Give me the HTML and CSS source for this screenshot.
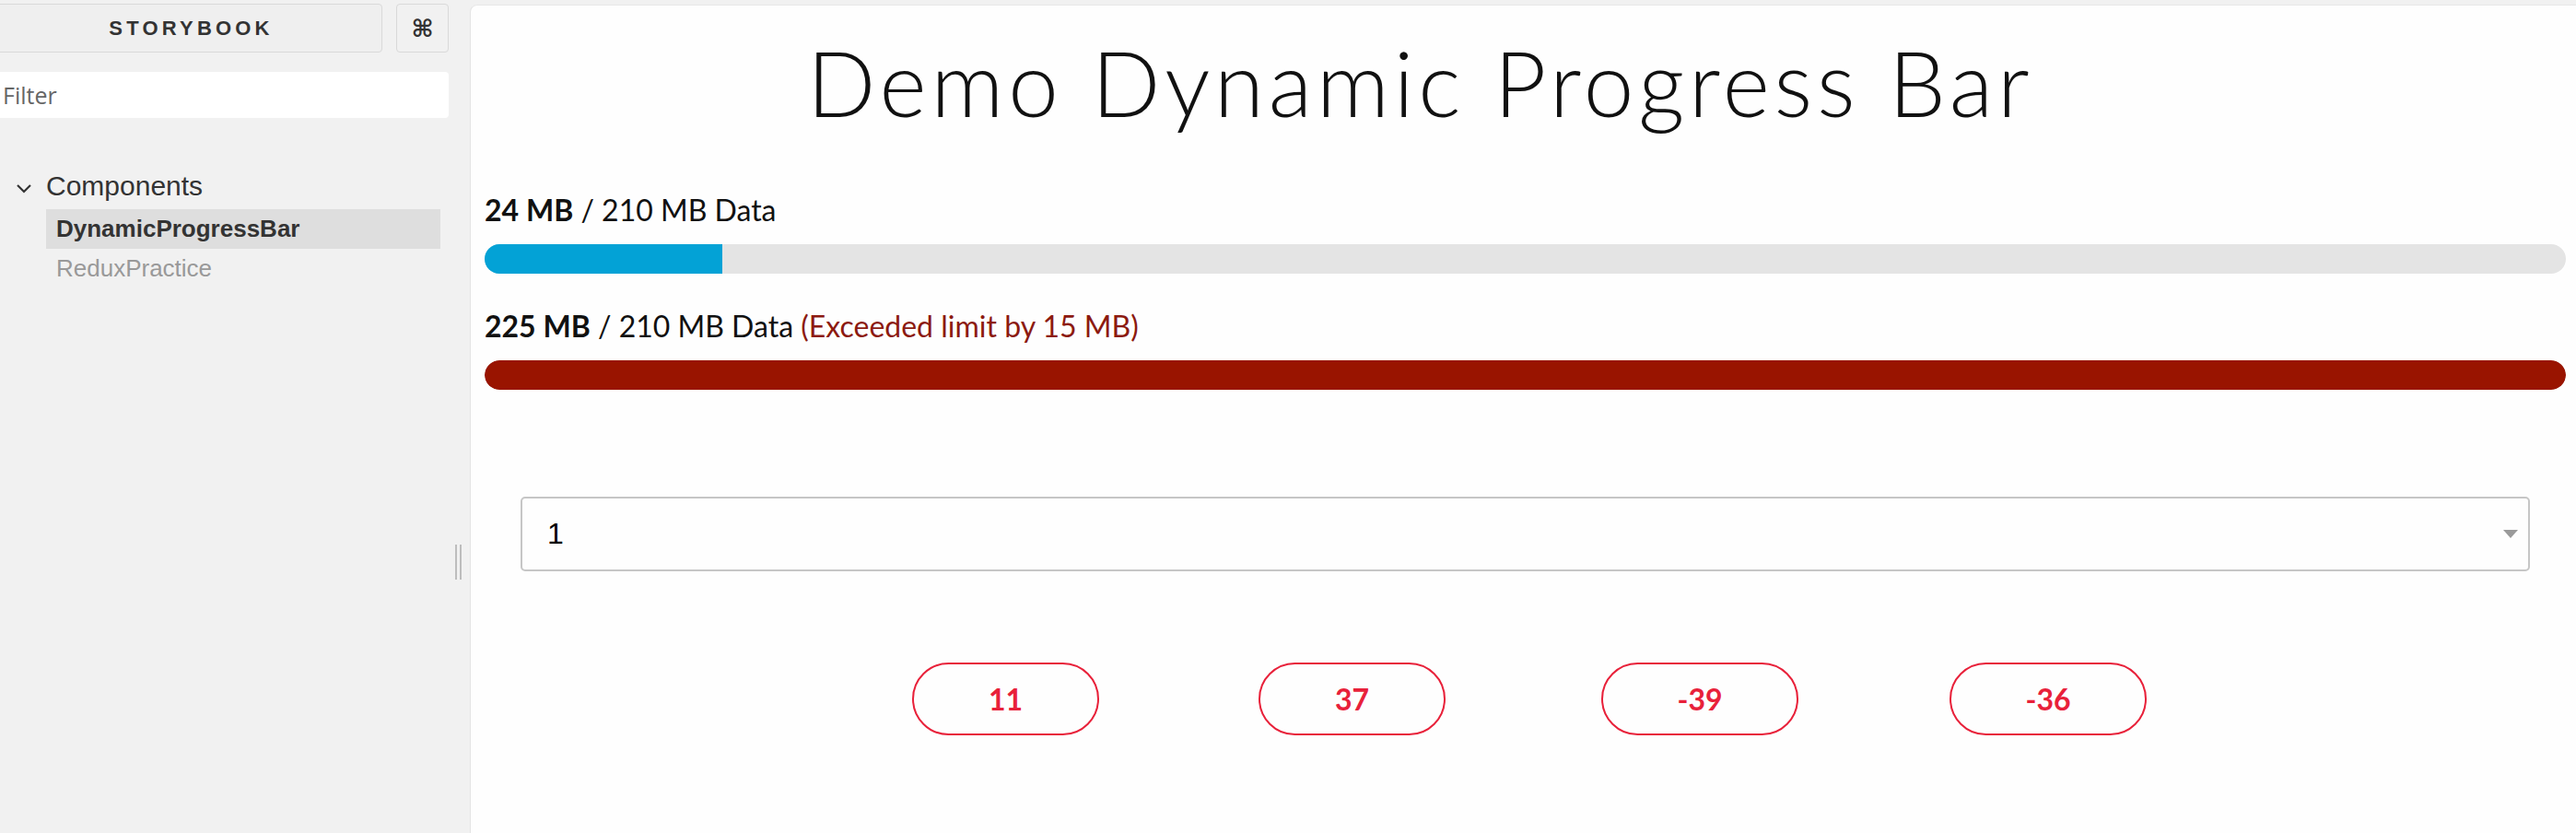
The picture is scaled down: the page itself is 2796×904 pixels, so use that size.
FILE: index.html
```html
<!DOCTYPE html>
<html>
<head>
<meta charset="utf-8">
<link rel="stylesheet" href="styles.css">
</head>
<body>
<div class="app">
  <aside class="sidebar">
    <div class="header">
      <div class="brand">STORYBOOK</div>
      <div class="shortcut">⌘</div>
    </div>
    <div class="filter">Filter</div>
    <div class="tree">
      <div class="kind">
        <svg class="chev" width="18" height="11" viewBox="0 0 18 11"><path d="M2 2 L9 9 L16 2" fill="none" stroke="#333" stroke-width="2.2"/></svg>
        <span>Components</span>
      </div>
      <div class="story active">DynamicProgressBar</div>
      <div class="story">ReduxPractice</div>
    </div>
  </aside>
  <div class="resizer"><span></span><span></span></div>
  <main class="main">
    <h1 class="title">Demo Dynamic Progress Bar</h1>
    <section class="progress">
      <div class="label"><b>24 MB</b> / 210 MB Data</div>
      <div class="track"><div class="fill" style="width:11.43%"></div></div>
    </section>
    <section class="progress second">
      <div class="label"><b>225 MB</b> / 210 MB Data <span class="over">(Exceeded limit by 15 MB)</span></div>
      <div class="track"><div class="fill over-fill" style="width:100%"></div></div>
    </section>
    <div class="select">
      <span>1</span>
      <svg class="arrow" width="16" height="9" viewBox="0 0 16 9"><path d="M0 0 H16 L8 9 Z" fill="#9a9a9a"/></svg>
    </div>
    <div class="buttons">
      <div class="btn">11</div>
      <div class="btn">37</div>
      <div class="btn wide">-39</div>
      <div class="btn wide">-36</div>
    </div>
  </main>
</div>
</body>
</html>
```

FILE: styles.css
```css
html, body {
  margin: 0;
  padding: 0;
}
body {
  background: #f1f1f1;
  width: 2796px;
  height: 904px;
  overflow: hidden;
  font-family: "Liberation Sans", Arial, sans-serif;
}
.app {
  display: flex;
  height: 904px;
}
.sidebar {
  width: 487px;
  flex: none;
  padding-top: 4px;
}
.header {
  display: flex;
  gap: 15px;
  margin-left: -20px;
}
.brand {
  width: 435px;
  height: 53px;
  box-sizing: border-box;
  padding-left: 20px;
  border: 1px solid #d9d9d9;
  border-radius: 4px;
  background: #efefef;
  display: flex;
  align-items: center;
  justify-content: center;
  font-weight: bold;
  font-size: 22px;
  letter-spacing: 4.2px;
  color: #333;
}
.shortcut {
  width: 57px;
  height: 53px;
  box-sizing: border-box;
  border: 1px solid #d9d9d9;
  border-radius: 4px;
  display: flex;
  align-items: center;
  justify-content: center;
  font-size: 26px;
  font-weight: bold;
  color: #333;
  font-family: "DejaVu Sans", sans-serif;
}
.filter {
  margin-top: 21px;
  height: 50px;
  background: #fff;
  border-radius: 0 4px 4px 0;
  display: flex;
  align-items: center;
  padding-left: 3px;
  font-size: 25px;
  color: #666;
  font-family: "Open Sans", sans-serif;
}
.tree {
  margin-top: 54px;
}
.kind {
  display: flex;
  align-items: center;
  height: 40px;
  padding-left: 17px;
  font-size: 30px;
  color: #333;
}
.chev {
  margin-right: 15px;
  margin-top: 4px;
}
.story {
  margin-left: 50px;
  margin-right: 9px;
  height: 42px;
  display: flex;
  align-items: center;
  padding-left: 11px;
  font-size: 26px;
  color: #999;
}
.story.active {
  margin-top: 5px;
  background: #dedede;
  font-weight: bold;
  color: #333;
  height: 43px;
}
.resizer {
  width: 23px;
  flex: none;
  display: flex;
  align-items: flex-start;
  gap: 3px;
  padding: 591px 0 0 7px;
  box-sizing: border-box;
}
.resizer span {
  width: 2px;
  height: 38px;
  background: #bdbdbd;
}
.main {
  flex: 1;
  margin-top: 5px;
  background: #fefefe;
  border-radius: 8px 0 0 0;
  border-left: 1px solid #e4e4e4;
  border-top: 1px solid #e8e8e8;
  padding: 0 11px 0 15px;
  font-family: Lato, "Open Sans", sans-serif;
  color: #111;
}
.title {
  margin: 26px 0 0 0;
  padding-left: 350px;
  font-size: 98px;
  font-weight: 300;
  line-height: 115px;
  letter-spacing: 4.8px;
}
.progress {
  margin-top: 61px;
}
.progress.second {
  margin-top: 37px;
}
.label {
  font-size: 32px;
  line-height: 40px;
  margin-bottom: 17px;
}
.label b {
  font-weight: 700;
}
.over {
  color: #8c1a10;
}
.track {
  height: 32px;
  border-radius: 16px;
  background: #e4e4e4;
  overflow: hidden;
}
.fill {
  height: 100%;
  background: #03a2d6;
}
.over-fill {
  background: #991400;
  border-radius: 16px;
}
.select {
  margin: 116px 39px 0 39px;
  height: 81px;
  box-sizing: border-box;
  border: 2px solid #c6c6c6;
  border-radius: 5px;
  display: flex;
  align-items: center;
  justify-content: space-between;
  padding: 0 11px 0 27px;
  font-family: "Liberation Sans", Arial, sans-serif;
  font-size: 32px;
  color: #000;
}
.buttons {
  margin-top: 99px;
  display: flex;
  justify-content: center;
  padding-left: 9px;
}
.btn {
  width: 203px;
  height: 79px;
  box-sizing: border-box;
  border: 2px solid #e8213a;
  border-radius: 40px;
  display: flex;
  align-items: center;
  justify-content: center;
  color: #e8213a;
  font-weight: 700;
  font-size: 32px;
  font-family: Lato, sans-serif;
}
.btn:nth-child(2) {
  margin-left: 173px;
}
.btn:nth-child(3) {
  margin-left: 169px;
}
.btn:nth-child(4) {
  margin-left: 164px;
}
.btn.wide {
  width: 214px;
}
```
